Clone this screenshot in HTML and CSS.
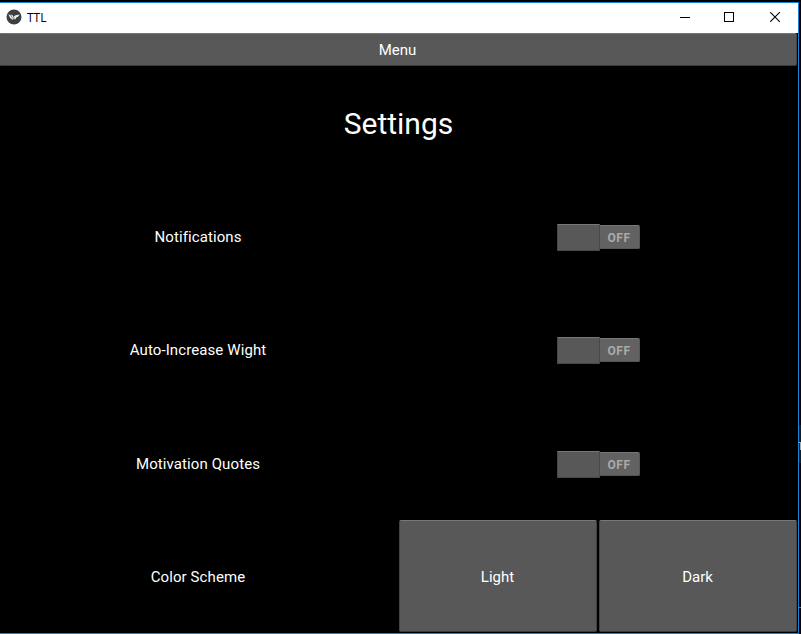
FILE: index.html
```html
<!DOCTYPE html>
<html lang="en">
<head>
<meta charset="utf-8">
<title>TTL</title>
<link rel="stylesheet" href="styles.css">
</head>
<body>
<div class="window">
  <header class="titlebar">
    <svg class="logo" width="16" height="16" viewBox="0 0 16 16"><circle cx="8" cy="8" r="7.5" fill="#3c4043"/><path d="M2.4 5.2 4.8 6.2 5.8 5.4 7.6 7.4 9.6 6.2 13.8 5.6 12 7.8 10.6 8.2 9.2 10.6 7.8 9.8 6.4 10.8 4 8.8Z" fill="#eee"/><path d="m4.8 6 1.8 3.4M7.6 7 8 9.8" stroke="#3c4043" stroke-width=".6"/></svg>
    <span class="caption">TTL</span>
    <div class="controls">
      <svg width="11" height="11" viewBox="0 0 11 11" shape-rendering="crispEdges"><path d="M.5 5.5h10"/></svg>
      <svg width="11" height="11" viewBox="0 0 11 11" shape-rendering="crispEdges"><path d="M.5.5h9v9h-9z"/></svg>
      <svg width="11" height="11" viewBox="0 0 11 11"><path d="m.2.2 9.6 9.6m0-9.6L.2 9.8"/></svg>
    </div>
  </header>
  <main class="client">
    <button class="button menu">Menu</button>
    <h1>Settings</h1>
    <div class="row"><span class="label">Notifications</span><div class="cell"><div class="switch"><span class="thumb"></span><span class="off">OFF</span></div></div></div>
    <div class="row"><span class="label">Auto-Increase Wight</span><div class="cell"><div class="switch"><span class="thumb"></span><span class="off">OFF</span></div></div></div>
    <div class="row"><span class="label">Motivation Quotes</span><div class="cell"><div class="switch"><span class="thumb"></span><span class="off">OFF</span></div></div></div>
    <div class="row"><span class="label">Color Scheme</span><div class="cell schemes"><button class="button">Light</button><button class="button">Dark</button></div></div>
  </main>
</div>
<aside class="desktop"><span class="edge-window"><svg width="2" height="8" viewBox="0 0 2 8"><path d="M0 0h2v8H1V1H0z" fill="#aaa"/></svg></span><span class="edge-line"></span></aside>
</body>
</html>
```
FILE: styles.css
```css
* { box-sizing: border-box; }
body { margin: 0; width: 801px; height: 634px; display: flex; overflow: hidden; background: #000; color: #fff; font: 15px/18px Roboto, sans-serif; }
.window { width: 799px; height: 632px; margin-top: 2px; border: solid #1683d8; border-width: 1px 1px 1px 0; flex: none; overflow: hidden; }
.titlebar { height: 30px; display: flex; align-items: center; background: #fff; color: #000; padding-left: 6px; }
.logo { margin-top: -2px; }
.caption { margin: -1px 0 0 5px; font: 12px/16px "Open Sans", sans-serif; }
.controls { margin-left: auto; display: flex; gap: 34px; padding-right: 18px; }
.controls svg { fill: none; stroke: #000; stroke-width: 1.1; margin-top: -1px; }
.controls svg:last-child { margin-left: 1px; margin-right: -1px; }
.client { width: 800px; height: 600px; margin-left: -2px; display: grid; grid-template-rows: 33px repeat(5, 1fr); }
.button { border: 1px solid #444; border-top-color: #777; border-bottom-color: #3b3b3b; border-radius: 2px; background: #585858; color: #fff; font: inherit; padding: 0; }
.menu { margin: 0 1px; padding-right: 1px; }
h1 { margin: 0; padding: 2px 0 0 1px; align-self: center; text-align: center; font-size: 30px; line-height: 36px; font-weight: 400; }
.row { display: grid; grid-template-columns: 1fr 1fr; }
.label { place-self: center; padding-top: 2px; letter-spacing: .1px; font-variant-ligatures: none; }
.cell { display: flex; justify-content: center; align-items: center; }
.switch { display: flex; align-items: center; width: 83px; height: 27px; margin-top: 2.4px; }
.thumb { width: 43px; height: 27px; background: #585858; border: 1px solid #484848; border-top-color: #777; border-radius: 1px; }
.off { width: 40px; height: 24px; margin-top: -1px; background: #626262; border: 1px solid #555; border-top-color: #777; border-left: 0; border-radius: 0 2px 2px 0; color: #aaa; text-align: center; font: 700 12px/24px Roboto, sans-serif; letter-spacing: .5px; }
.schemes { align-items: stretch; gap: 2px; padding: 0 1px 1px; }
.schemes .button { flex: 1; padding: 2px 1px 0 0; }
.desktop { flex: 1; display: flex; flex-direction: column; overflow: hidden; }
.edge-window { height: 38px; margin-top: 425px; padding-top: 17px; background: #17191c; flex: none; }
.edge-window svg { display: block; }
.edge-line { height: 1px; margin-top: 144px; background: #1683d8; flex: none; }
```
